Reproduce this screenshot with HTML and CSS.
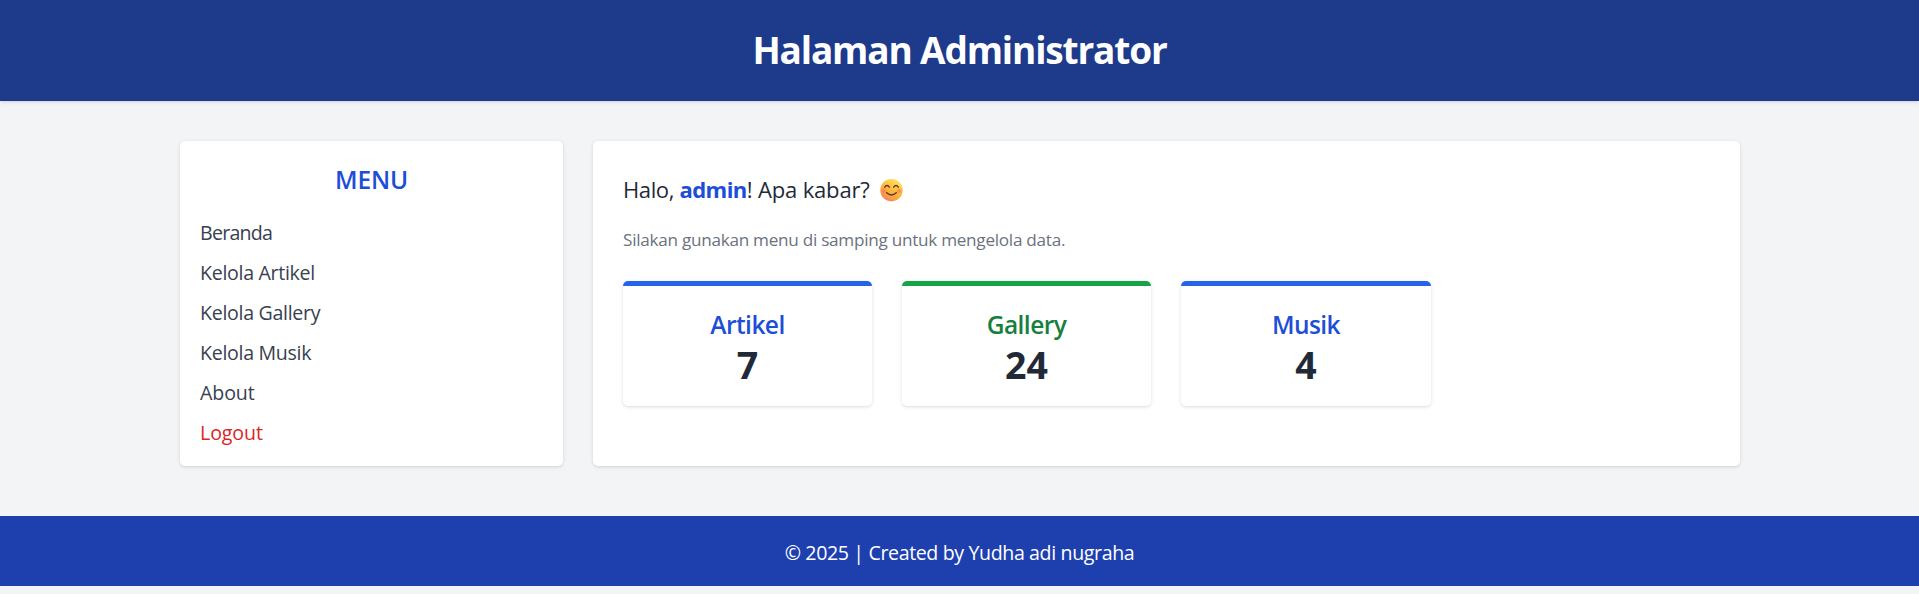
FILE: index.html
```html
<!DOCTYPE html>
<html lang="id">
<head>
<meta charset="utf-8">
<title>Halaman Administrator</title>
<link rel="stylesheet" href="styles.css">
</head>
<body>
<header class="header"><h1 class="title">Halaman Administrator</h1></header>
<div class="layout">
  <nav class="card sidebar">
    <h2 class="menu-title">MENU</h2>
    <ul class="menu">
      <li class="tight">Beranda</li>
      <li>Kelola Artikel</li>
      <li>Kelola Gallery</li>
      <li>Kelola Musik</li>
      <li class="loose">About</li>
      <li class="loose logout">Logout</li>
    </ul>
  </nav>
  <main class="card content">
    <p class="greeting"><span class="hello">Halo, </span><span class="user">admin</span><span>! Apa kabar?</span>
      <svg class="smile" viewBox="0 0 23 23" role="img" aria-label="smile">
        <defs>
          <linearGradient id="face" x1="0.8" y1="0.05" x2="0.25" y2="1">
            <stop offset="0" stop-color="#ffe45c"/>
            <stop offset="0.5" stop-color="#ffb73b"/>
            <stop offset="0.8" stop-color="#fb9a45"/>
            <stop offset="1" stop-color="#f0706f"/>
          </linearGradient>
          <radialGradient id="blush">
            <stop offset="0" stop-color="#f4655d" stop-opacity=".65"/>
            <stop offset="1" stop-color="#f4655d" stop-opacity="0"/>
          </radialGradient>
        </defs>
        <circle cx="11.5" cy="11.2" r="11.2" fill="url(#face)"/>
        <circle cx="3.8" cy="12" r="3.6" fill="url(#blush)"/>
        <circle cx="19.2" cy="12" r="3.6" fill="url(#blush)"/>
        <g fill="none" stroke="#5a3430" stroke-width="1.4" stroke-linecap="round">
          <path d="M4.7 8.2Q7 4.8 9.3 8.2"/>
          <path d="M13.7 8.2Q16 4.8 18.3 8.2"/>
          <path d="M6.7 13.8Q11.5 18 16.3 13.8"/>
        </g>
      </svg>
    </p>
    <p class="hint">Silakan gunakan menu di samping untuk mengelola data.</p>
    <div class="stats">
      <div class="stat"><h3>Artikel</h3><p>7</p></div>
      <div class="stat green"><h3>Gallery</h3><p>24</p></div>
      <div class="stat"><h3>Musik</h3><p>4</p></div>
    </div>
  </main>
</div>
<footer class="footer">© 2025 | Created by Yudha adi nugraha</footer>
</body>
</html>
```
FILE: styles.css
```css
* { box-sizing: border-box; margin: 0; padding: 0; }
body { background: #f3f4f6; color: #1f2937; font: 19.6px/30px "Open Sans", "Noto Sans", sans-serif; overflow: hidden; height: 594px; }
.header { height: 101px; padding-top: 27px; background: #1e3a8a; color: #fff; text-align: center; box-shadow: 0 1px 4px rgba(0,0,0,.1), 0 1px 3px -1px rgba(0,0,0,.1); }
.title { font-size: 37px; line-height: 45px; font-weight: 700; letter-spacing: -1.16px; }
.layout { display: grid; grid-template-columns: 383px 1147px; gap: 30px; padding: 40px 179px 50px 180px; }
.card { background: #fff; border-radius: 5px; box-shadow: 0 1px 4px rgba(0,0,0,.1), 0 1px 3px -1px rgba(0,0,0,.1); height: 325px; }
.sidebar { padding: 21px 20px 0; }
.menu-title { font-size: 24.5px; line-height: 35px; font-weight: 600; color: #1d4ed8; text-align: center; margin-bottom: 21px; letter-spacing: -.2px; }
.menu { list-style: none; display: flex; flex-direction: column; gap: 10px; color: #374151; letter-spacing: -.31px; }
.menu .tight { letter-spacing: -.76px; }
.menu .loose { letter-spacing: -.1px; }
.menu .logout { color: #dc2626; }
.content { padding: 31px 30px 0; }
.greeting { display: flex; font-size: 22.05px; line-height: 35px; margin-bottom: 20px; letter-spacing: -.18px; }
.hello { white-space: pre; letter-spacing: -.4px; }
.user { font-weight: 700; color: #1d4ed8; letter-spacing: -.55px; }
.smile { width: 23px; height: 23px; margin: 7px 0 0 10px; }
.hint { font-size: 17.15px; line-height: 25px; color: #6b7280; margin-bottom: 29px; letter-spacing: -.27px; }
.stats { display: grid; grid-template-columns: 249px 249px 250px; gap: 30px; }
.stat { height: 125px; border-top: 5px solid #2563eb; border-radius: 5px; padding: 21px 20px 0; text-align: center; box-shadow: 0 1px 4px rgba(0,0,0,.1), 0 1px 3px -1px rgba(0,0,0,.1); }
.stat h3 { font-size: 24.5px; line-height: 35px; font-weight: 600; color: #1d4ed8; letter-spacing: -.55px; }
.stat p { font-size: 37.5px; line-height: 45px; font-weight: 700; }
.stat.green { border-color: #16a34a; }
.stat.green h3 { color: #15803d; }
.footer { height: 70px; padding-top: 22px; background: #1e40af; color: #fff; text-align: center; letter-spacing: -.38px; }
```
